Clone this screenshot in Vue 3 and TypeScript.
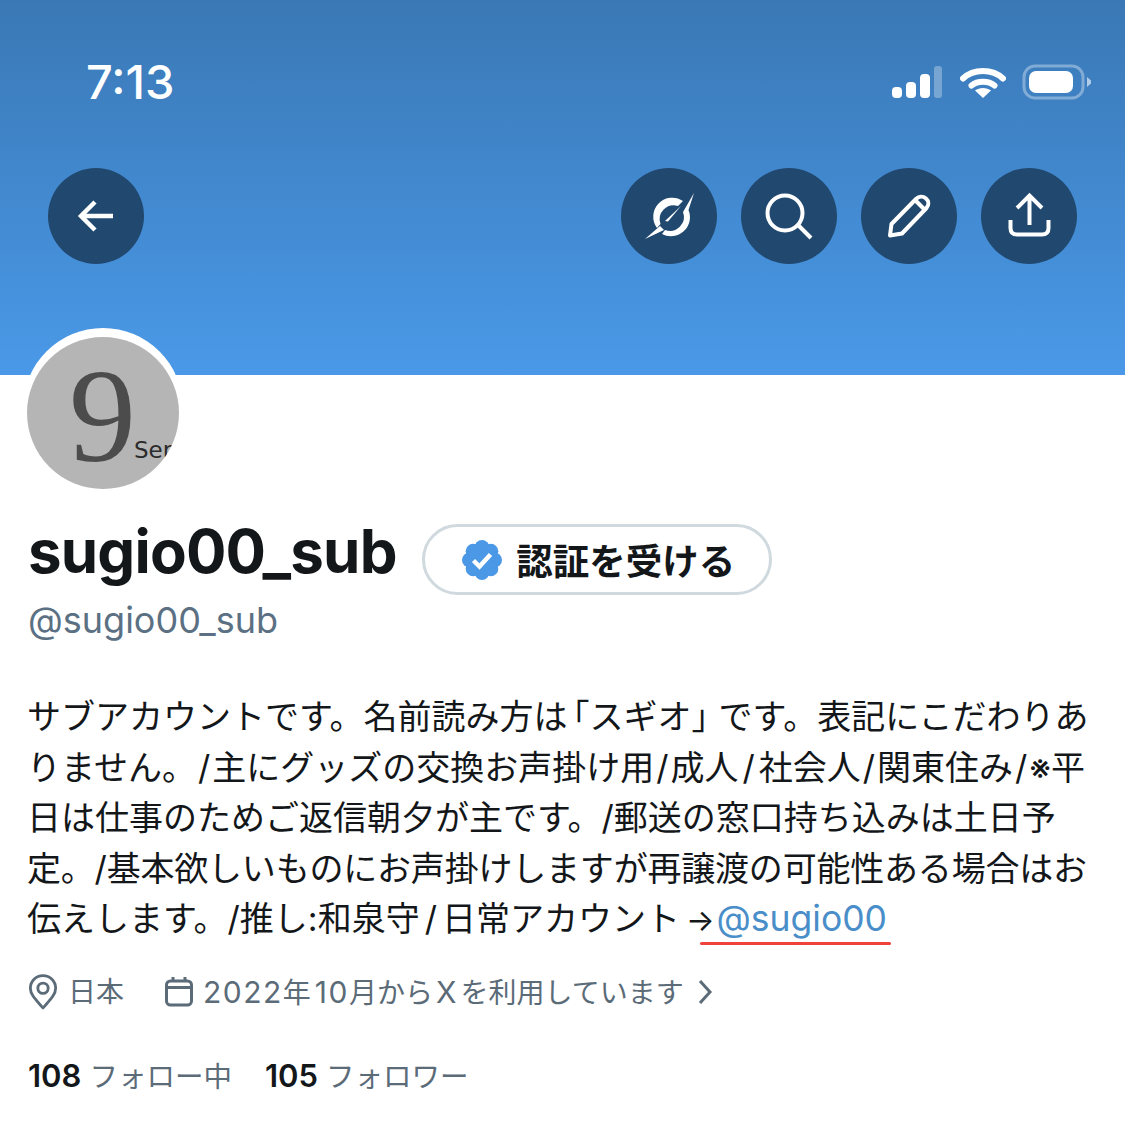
<template>
  <div class="page">
    <header class="banner">
      <div class="status">
        <span class="time">7:13</span>
        <div class="status-icons">
          <svg width="52" height="34" viewBox="0 0 52 34">
            <rect x="0" y="22" width="10" height="11" rx="4" fill="#fff" />
            <rect x="14" y="17" width="10" height="16" rx="4" fill="#fff" />
            <rect x="28" y="9" width="10" height="24" rx="4" fill="#fff" />
            <rect x="42" y="1" width="8" height="32" rx="3" fill="#fff" opacity=".3" />
          </svg>
          <svg width="46" height="34" viewBox="0 0 46 34">
            <path d="M3 13.500C13.500 3.500 32.500 3.500 43 13.500" fill="none" stroke="#fff" stroke-width="6" stroke-linecap="round" />
            <path d="M11.500 20.500C17.500 15.500 28.500 15.500 34.500 20.500" fill="none" stroke="#fff" stroke-width="6" stroke-linecap="round" />
            <path d="M23 33L15 25.500C19.500 22 26.500 22 31 25.500Z" fill="#fff" />
          </svg>
          <svg width="70" height="36" viewBox="0 0 70 36">
            <rect x="2" y="2" width="59" height="32" rx="11" fill="none" stroke="#fff" stroke-width="3" opacity=".35" />
            <rect x="7" y="7" width="44" height="22" rx="7" fill="#fff" />
            <path d="M65 13L69 16.500V19.500L65 23Z" fill="#fff" opacity=".6" />
          </svg>
        </div>
      </div>
      <nav class="nav">
        <button class="round">
          <svg width="48" height="48" viewBox="0 0 48 48" fill="none" stroke="#fff" stroke-width="4.500">
            <path d="M41 24H9M23 10L9 24L23 38" />
          </svg>
        </button>
        <div class="nav-right">
          <button class="round">
            <svg width="56" height="56" viewBox="0 0 56 56" fill="#fff">
              <path d="M16 40A19 19 0 0 1 42 13L37 18A14 14 0 0 0 19.500 36Z" />
              <path d="M53 5L47.500 22A19 19 0 0 1 21 46L24 42A14 14 0 0 0 42 24Z" />
              <path d="M40 18L24 33L27 33.500Z" />
              <path d="M4 51L19 38L23 42Z" />
            </svg>
          </button>
          <button class="round">
            <svg width="56" height="56" viewBox="0 0 56 56" fill="none" stroke="#fff" stroke-width="4">
              <circle cx="24" cy="25" r="17.500" />
              <path d="M37 37L50 50" />
            </svg>
          </button>
          <button class="round">
            <svg width="56" height="56" viewBox="0 0 56 56" fill="none" stroke="#fff" stroke-width="4" stroke-linejoin="round">
              <path d="M9 47.500L10.500 36L35 11C38 8 42 8 45 10.500C48 13 48 17 45.500 20L21 45.500Z" />
              <path d="M34 12L44 22" />
            </svg>
          </button>
          <button class="round">
            <svg width="56" height="56" viewBox="0 0 56 56" fill="none" stroke="#fff" stroke-width="4">
              <path d="M28.500 37V8M16 20L28.500 7.500L41 20" />
              <path d="M9.500 32V40C9.500 44.500 12 46.500 16 46.500H41C45 46.500 47.500 44.500 47.500 40V32" />
            </svg>
          </button>
        </div>
      </nav>
    </header>

    <main class="profile">
      <div class="avatar-ring">
        <div class="avatar">
          <span class="nine">9</span>
          <span class="ser">Ser</span>
        </div>
      </div>

      <div class="name-row">
        <h1 class="name">sugio00_sub</h1>
        <button class="verify">
          <svg width="42" height="42" viewBox="0 0 42 42">
            <g fill="#4a98e6">
              <circle cx="21" cy="21" r="14" />
              <circle v-for="p in lobes" :key="p[0] + '-' + p[1]" :cx="p[0]" :cy="p[1]" r="7.500" />
            </g>
            <path d="M12.500 21.500L18.500 27.500L29.500 15.500" fill="none" stroke="#fff" stroke-width="4.500" />
          </svg>
          <span>認証を受ける</span>
        </button>
      </div>
      <div class="handle">@sugio00_sub</div>

      <div class="bio">
        <div>サブアカウントです。名前読み方は<span class="open">「</span>スギオ<span class="close">」</span>です。表記にこだわりあ</div>
        <div>りません。<span class="sl">/</span>主にグッズの交換お声掛け用<span class="sl">/</span>成人<span class="sl wide">/</span>社会人<span class="sl">/</span>関東住み<span class="sl">/</span>※平</div>
        <div>日は仕事のためご返信朝夕が主です。/郵送の窓口持ち込みは土日予</div>
        <div class="tighter">定。/基本欲しいものにお声掛けしますが再譲渡の可能性ある場合はお</div>
        <div>伝えします。/推し:和泉守<span class="sl last">/</span>日常アカウント<span class="arrow">→</span><span class="link">@sugio00</span></div>
      </div>

      <div class="meta">
        <span class="meta-item">
          <svg width="30" height="36" viewBox="0 0 32 38" fill="none" stroke="#5b6b78" stroke-width="3">
            <path d="M16 36C9 28 2.500 22 2.500 15A13.500 13.500 0 0 1 29.500 15C29.500 22 23 28 16 36Z" stroke-linejoin="round" />
            <circle cx="16" cy="15" r="5.500" />
          </svg>
          <span>日本</span>
        </span>
        <span class="meta-item">
          <svg width="28" height="30" viewBox="0 0 28 30" fill="none" stroke="#5b6b78" stroke-width="3">
            <rect x="1.500" y="4" width="25" height="24" rx="4" />
            <path d="M1.500 10.500H26.500M8 0V5M20 0V5" />
          </svg>
          <span><span class="num">2022</span>年<span class="num ten">10</span>月から<span class="x">X</span>を利用しています</span>
          <svg class="chevron" width="16" height="26" viewBox="0 0 16 26" fill="none" stroke="#5b6b78" stroke-width="3">
            <path d="M3 2L13 13L3 24" />
          </svg>
        </span>
      </div>

      <div class="counts">
        <span v-for="c in counts" :key="c.label"><b>{{ c.value }}</b> {{ c.label }}</span>
      </div>
    </main>
  </div>
</template>

<script setup lang="ts">
const counts: { value: number; label: string }[] = [
  { value: 108, label: 'フォロー中' },
  { value: 105, label: 'フォロワー' },
]

// scallops of the verified badge
const lobes: number[][] = [
  [21, 8.5],
  [29.8, 12.2],
  [33.5, 21],
  [29.8, 29.8],
  [21, 33.5],
  [12.2, 29.8],
  [8.5, 21],
  [12.2, 12.2],
]
</script>

<style>
html,
body {
  background: #fff;
}
</style>

<style scoped>
.page {
  width: 1125px;
  height: 1125px;
  overflow: hidden;
  background: #fff;
  font-family: Inter, "Noto Sans CJK JP", sans-serif;
  color: #14171a;
}

.banner {
  height: 375px;
  box-sizing: border-box;
  padding: 53px 48px 0;
  background: linear-gradient(#3a78b5, #4a99e8);
}

.status {
  display: flex;
  align-items: center;
  justify-content: space-between;
  height: 56px;
  padding-left: 38px;
  margin-right: -15px;
}

.time {
  font-size: 47px;
  font-weight: 500;
  color: #fff;
}

.status-icons {
  display: flex;
  align-items: center;
  gap: 16px;
  margin-top: 2px;
}

.nav {
  display: flex;
  justify-content: space-between;
  margin-top: 59px;
}

.nav-right {
  display: flex;
  gap: 24px;
}

.round {
  display: flex;
  align-items: center;
  justify-content: center;
  width: 96px;
  height: 96px;
  padding: 0;
  border: 0;
  border-radius: 50%;
  background: #21486f;
}

.profile {
  padding: 0 28px;
}

.avatar-ring {
  box-sizing: border-box;
  width: 160px;
  height: 160px;
  margin: -47px 0 0 -5px;
  padding: 9px 4px 0;
  border-radius: 50%;
  background: #fff;
}

.avatar {
  position: relative;
  width: 152px;
  height: 152px;
  overflow: hidden;
  border-radius: 50%;
  background: #b5b5b5;
}

.nine {
  position: absolute;
  left: 42px;
  top: 9px;
  font-family: "Liberation Serif", serif;
  font-size: 134px;
  line-height: 140px;
  color: #4c4c4c;
}

.ser {
  position: absolute;
  left: 107px;
  top: 98px;
  font-family: "DejaVu Sans", sans-serif;
  font-size: 23px;
  line-height: 30px;
  color: #2b2b2b;
}

.name-row {
  display: flex;
  align-items: flex-start;
  gap: 25px;
  margin-top: 36px;
}

.name {
  margin: 0;
  font-size: 60px;
  font-weight: 700;
  line-height: 54px;
  letter-spacing: -0.8px;
}

.verify {
  display: flex;
  align-items: center;
  justify-content: center;
  gap: 13px;
  box-sizing: border-box;
  width: 350px;
  height: 71px;
  padding: 0 0 0 3px;
  border: 3px solid #cfd9de;
  border-radius: 36px;
  background: #fff;
  font-family: inherit;
  font-size: 36.500px;
  font-weight: 700;
  color: #14171a;
}

.handle {
  margin-top: 3px;
  font-size: 36px;
  line-height: 44px;
  color: #5b7083;
}

.bio {
  margin: 50px 0 0 -1px;
  font-size: 34px;
  line-height: 50.600px;
  white-space: nowrap;
}

.tighter {
  letter-spacing: -0.2px;
}

/* half width brackets, like the iOS text rendering */
.open {
  font-feature-settings: "halt";
  margin-left: 5px;
}

.close {
  font-feature-settings: "halt";
  margin-right: 10px;
}

.sl {
  margin: 0 2px;
}

.wide {
  margin: 0 4px;
}

.last {
  margin: 0 5px;
}

.arrow {
  margin-left: 6px;
  font-size: 30px;
}

.link {
  position: relative;
  padding-left: 2px;
  font-size: 35.500px;
  color: #4a8ec9;
}

.link::after {
  content: "";
  position: absolute;
  left: -15px;
  right: -4px;
  bottom: -5px;
  height: 3px;
  border-radius: 2px;
  background: #f0413a;
}

.meta {
  display: flex;
  gap: 41px;
  margin-top: 24px;
  font-size: 28px;
  line-height: 44px;
  color: #5b6b78;
}

.meta-item {
  display: flex;
  align-items: center;
  gap: 10px;
}

.num {
  font-size: 30px;
  letter-spacing: 1.500px;
}

.ten {
  margin-left: 4px;
}

.x {
  margin: 0 4px 0 3px;
  font-size: 30px;
}

.chevron {
  margin-left: 3px;
}

.counts {
  display: flex;
  gap: 33px;
  margin-top: 39px;
  font-size: 28.500px;
  line-height: 44px;
  color: #5b6b78;
}

.counts b {
  font-size: 31px;
  font-weight: 600;
  color: #14171a;
}
</style>
